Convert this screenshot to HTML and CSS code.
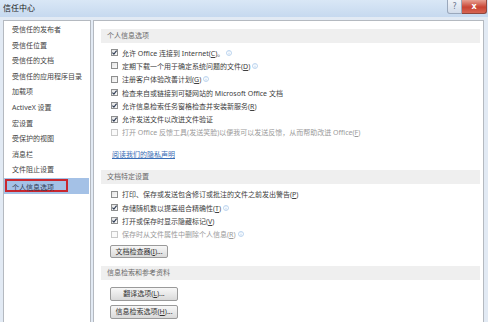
FILE: index.html
```html
<!DOCTYPE html>
<html lang="zh-CN">
<head>
<meta charset="utf-8">
<title>信任中心</title>
<link rel="stylesheet" href="styles.css">
</head>
<body>
<div class="window">
  <div class="titlebar">
    <span class="title">信任中心</span>
    <div class="ctrls">
      <span class="btn-help">?</span>
      <span class="btn-close">x</span>
    </div>
  </div>
  <div class="main">
    <div class="nav">
      <div class="nav-item">受信任的发布者</div>
      <div class="nav-item">受信任位置</div>
      <div class="nav-item">受信任的文档</div>
      <div class="nav-item">受信任的应用程序目录</div>
      <div class="nav-item">加载项</div>
      <div class="nav-item">ActiveX 设置</div>
      <div class="nav-item">宏设置</div>
      <div class="nav-item">受保护的视图</div>
      <div class="nav-item">消息栏</div>
      <div class="nav-item">文件阻止设置</div>
      <div class="nav-item selected"><span class="mark">个人信息选项</span></div>
    </div>
    <div class="content">
      <div class="section">个人信息选项</div>
      <div class="rows first">
        <div class="row"><span class="cb checked"><svg viewBox="0 0 7 7"><path d="M1.4 3.6 L2.9 5.1 L5.6 1.6"/></svg></span><span>允许 Office 连接到 Internet(<u>C</u>)。</span><svg class="info" viewBox="0 0 7 7"><circle cx="3.5" cy="3.5" r="2.9"/><path d="M3.5 3.1 V5.4 M3.5 1.6 V2.3"/></svg></div>
        <div class="row"><span class="cb"></span><span>定期下载一个用于确定系统问题的文件(<u>D</u>)</span><svg class="info" viewBox="0 0 7 7"><circle cx="3.5" cy="3.5" r="2.9"/><path d="M3.5 3.1 V5.4 M3.5 1.6 V2.3"/></svg></div>
        <div class="row"><span class="cb"></span><span>注册客户体验改善计划(<u>G</u>)</span><svg class="info" viewBox="0 0 7 7"><circle cx="3.5" cy="3.5" r="2.9"/><path d="M3.5 3.1 V5.4 M3.5 1.6 V2.3"/></svg></div>
        <div class="row"><span class="cb checked"><svg viewBox="0 0 7 7"><path d="M1.4 3.6 L2.9 5.1 L5.6 1.6"/></svg></span><span>检查来自或链接到可疑网站的 Microsoft Office 文档</span></div>
        <div class="row"><span class="cb checked"><svg viewBox="0 0 7 7"><path d="M1.4 3.6 L2.9 5.1 L5.6 1.6"/></svg></span><span>允许信息检索任务窗格检查并安装新服务(<u>R</u>)</span></div>
        <div class="row"><span class="cb checked"><svg viewBox="0 0 7 7"><path d="M1.4 3.6 L2.9 5.1 L5.6 1.6"/></svg></span><span>允许发送文件以改进文件验证</span></div>
        <div class="row disabled"><span class="cb"></span><span>打开 Office 反馈工具(发送笑脸)以便我可以发送反馈，从而帮助改进 Office(<u>F</u>)</span></div>
      </div>
      <a class="link" href="#">阅读我们的隐私声明</a>
      <div class="section s2">文档特定设置</div>
      <div class="rows second">
        <div class="row"><span class="cb"></span><span>打印、保存或发送包含修订或批注的文件之前发出警告(<u>P</u>)</span></div>
        <div class="row"><span class="cb checked"><svg viewBox="0 0 7 7"><path d="M1.4 3.6 L2.9 5.1 L5.6 1.6"/></svg></span><span>存储随机数以提高组合精确性(<u>T</u>)</span><svg class="info" viewBox="0 0 7 7"><circle cx="3.5" cy="3.5" r="2.9"/><path d="M3.5 3.1 V5.4 M3.5 1.6 V2.3"/></svg></div>
        <div class="row"><span class="cb checked"><svg viewBox="0 0 7 7"><path d="M1.4 3.6 L2.9 5.1 L5.6 1.6"/></svg></span><span>打开或保存时显示隐藏标记(<u>V</u>)</span></div>
        <div class="row disabled"><span class="cb"></span><span>保存时从文件属性中删除个人信息(<u>R</u>)</span><svg class="info" viewBox="0 0 7 7"><circle cx="3.5" cy="3.5" r="2.9"/><path d="M3.5 3.1 V5.4 M3.5 1.6 V2.3"/></svg></div>
      </div>
      <div class="btn b1">文档检查器(<u>I</u>)...</div>
      <div class="section s3">信息检索和参考资料</div>
      <div class="btn b2">翻译选项(<u>L</u>)...</div>
      <div class="btn b3">信息检索选项(<u>H</u>)...</div>
    </div>
  </div>
</div>
</body>
</html>
```
FILE: styles.css
```css
html, body {
  margin: 0;
  padding: 0;
}
body {
  width: 488px;
  height: 322px;
  overflow: hidden;
  font-family: "Noto Sans", "Noto Sans CJK SC", sans-serif;
  background: #e2eaf4;
}
.window {
  display: flex;
  flex-direction: column;
  height: 322px;
}
.titlebar {
  height: 17px;
  display: flex;
  align-items: flex-start;
  background: linear-gradient(#d9e7f6, #c6d9ef);
}
.title {
  font-size: 8px;
  line-height: 16px;
  color: #1a1a1a;
  margin-left: 3px;
}
.ctrls {
  margin-left: auto;
  margin-right: 1px;
  display: flex;
}
.btn-help, .btn-close {
  height: 14px;
  line-height: 13px;
  text-align: center;
  font-family: "DejaVu Sans", sans-serif;
  font-size: 8px;
  box-sizing: border-box;
}
.btn-help {
  width: 15px;
  background: linear-gradient(#f1f4f9, #d2dcea);
  border: 1px solid #9aa8bc;
  border-top: none;
  border-radius: 0 0 0 3px;
  color: #6a7890;
}
.btn-close {
  width: 25px;
  background: linear-gradient(#e7a092, #c94434 55%, #d66452);
  border: 1px solid #8f463d;
  border-top: none;
  border-left: none;
  border-radius: 0 0 3px 0;
  color: #fff;
  font-weight: bold;
}
.main {
  flex: 1;
  display: flex;
  gap: 2px;
  padding: 3px 4px 0 3px;
}
.nav {
  width: 88px;
  box-sizing: border-box;
  background: #fff;
  border: 1px solid #b4b9c0;
  border-bottom: none;
  padding-top: 1px;
}
.nav-item {
  height: 15.6px;
  line-height: 15.6px;
  font-size: 7px;
  color: #444;
  padding-left: 8px;
  white-space: nowrap;
}
.nav-item.selected {
  background: #a4c1e6;
  margin-right: 1px;
  padding-left: 1px;
  display: flex;
  align-items: center;
}
.mark {
  display: inline-block;
  border: 2px solid #c9262e;
  height: 13px;
  line-height: 13px;
  box-sizing: border-box;
  padding: 0 12px 0 5px;
  color: #2e3c55;
}
.content {
  flex: 1;
  box-sizing: border-box;
  background: #fff;
  border: 1px solid #b4b9c0;
  border-bottom: none;
  padding: 8px 3px 0 7px;
  font-size: 7px;
  color: #404040;
}
.section {
  height: 14px;
  line-height: 14px;
  background: #efefef;
  color: #6a6a6a;
  padding-left: 6px;
}
.rows.first { margin-top: 3px; }
.rows.second { margin-top: 4px; }
.row {
  height: 13.3px;
  display: flex;
  align-items: center;
  padding-left: 10px;
  white-space: nowrap;
}
.row.disabled { color: #9a9a9a; }
.cb {
  width: 7px;
  height: 7px;
  box-sizing: border-box;
  border: 1px solid #8e8f8f;
  background: linear-gradient(135deg, #e4e4e4, #fbfbfb);
  margin-right: 4px;
  flex: none;
  display: flex;
}
.row.disabled .cb {
  border-color: #c9c9c9;
  background: #fafafa;
}
.cb svg {
  width: 7px;
  height: 7px;
  margin: -1px;
  fill: none;
  stroke: #2d3a52;
  stroke-width: 1.1;
}
.info {
  width: 6px;
  height: 6px;
  margin-left: 2px;
  fill: none;
  stroke: #9ec2e8;
  stroke-width: 0.8;
}
u { text-decoration: underline; text-underline-offset: 1px; }
.link {
  display: block;
  margin-top: 9px;
  height: 13px;
  line-height: 13px;
  padding-left: 11px;
  color: #3a6db5;
  text-decoration: underline;
  width: max-content;
}
.section.s2 { margin-top: 8.5px; }
.section.s3 { margin-top: 8px; }
.btn {
  box-sizing: border-box;
  height: 14px;
  line-height: 12px;
  margin-left: 9px;
  border: 1px solid #9a9a9a;
  border-radius: 2px;
  background: linear-gradient(#f7f7f7, #e9e9e9 50%, #d9d9d9);
  text-align: center;
  color: #333;
  white-space: nowrap;
}
.b1 { width: 58px; margin-top: 4.4px; height: 13px; line-height: 11px; }
.b2 { width: 68px; margin-top: 7px; }
.b3 { width: 68px; margin-top: 4px; }
```
